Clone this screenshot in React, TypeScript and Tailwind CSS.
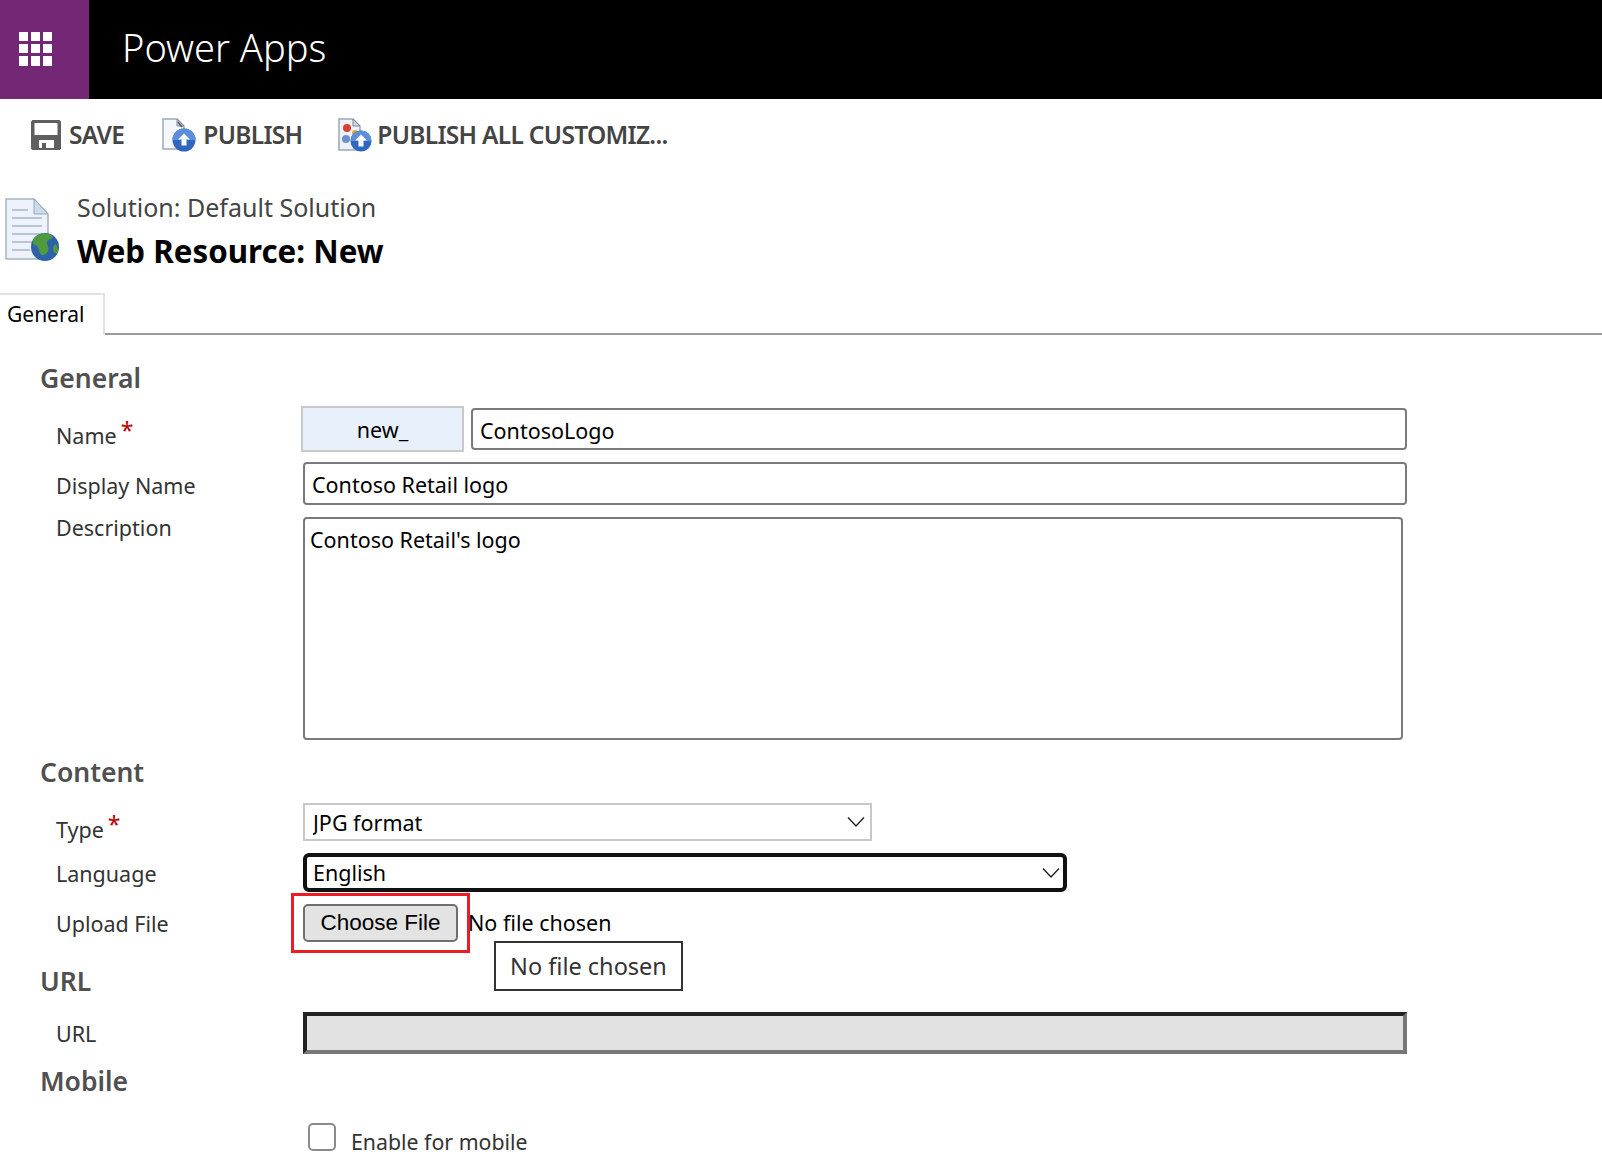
import type { ReactNode } from 'react'

function Waffle() {
  return (
    <div className="grid h-[34px] w-[34px] grid-cols-3 gap-[3px]">
      {Array.from({ length: 9 }).map((_, i) => (
        <span key={i} className="bg-white" />
      ))}
    </div>
  )
}

function SaveIcon() {
  return (
    <svg width="30" height="30" viewBox="0 0 30 30" className="shrink-0">
      <path d="M0 1.5 1.5 0h27L30 1.5v27L28.500 30h-27L0 28.500z" fill="#5f5f5f" />
      <rect x="3.500" y="3" width="23" height="12" fill="#fff" />
      <rect x="8" y="20" width="15" height="8" fill="#fff" />
      <rect x="11" y="23" width="4" height="5" fill="#5f5f5f" />
    </svg>
  )
}

function UpBall({ cx, cy, r }: { cx: number; cy: number; r: number }) {
  return (
    <>
      <circle cx={cx} cy={cy} r={r} fill="#2f66c0" />
      <path d={`M${cx - r} ${cy}a${r} ${r} 0 0 1 ${2 * r} 0z`} fill="#5b8fdc" />
      <path d={`M${cx} ${cy - 6.500}l6 6h-3.500v6h-5v-6h-3.500z`} fill="#fff" />
    </>
  )
}

function PublishIcon() {
  return (
    <svg width="34" height="34" viewBox="0 0 34 34" className="shrink-0">
      <path d="M1 1h14l7 7v23H1z" fill="#f4f7fc" stroke="#9fa8b5" strokeWidth="1.500" />
      <path d="M15 1v7h7z" fill="#c9d6e8" stroke="#7f8997" />
      <path d="M16 4l4 5" stroke="#555" strokeWidth="1.500" />
      <UpBall cx={22} cy={22} r={11.500} />
    </svg>
  )
}

function PublishAllIcon() {
  return (
    <svg width="34" height="34" viewBox="0 0 34 34" className="shrink-0">
      <path d="M1 1h14l7 7v24H1z" fill="#eef2f8" stroke="#9fa8b5" strokeWidth="1.500" />
      <path d="M15 1v7h7z" fill="#c9d6e8" stroke="#7f8997" />
      <circle cx="9" cy="10" r="4" fill="#d9412e" />
      <circle cx="17" cy="15" r="3" fill="#e9a92f" />
      <circle cx="8" cy="21" r="4" fill="#6c8fd0" />
      <UpBall cx={23} cy={23} r={10.500} />
    </svg>
  )
}

function WebResourceIcon() {
  return (
    <svg width="58" height="64" viewBox="0 0 58 64" className="shrink-0">
      <path d="M2 1h28l14 15v45H2z" fill="#eef3fb" stroke="#a9b3c2" strokeWidth="1.500" />
      <path d="M30 1v15h14z" fill="#cddbee" stroke="#9aa7b9" />
      <path d="M8 12h16M8 20h30M8 28h30M8 36h30M8 44h22M8 52h18" stroke="#b9c4d6" strokeWidth="2" />
      <circle cx="41" cy="49" r="14" fill="#2d62a8" />
      <path d="M34 37c6-3 12-2 15 2-2 3-5 2-6 5s3 5 1 9-6 6-8 2-1-6-5-8-3-7 3-10z" fill="#4f9a3e" />
      <path d="M51 46c3 2 4 6 2 10-2-1-4-2-4-5s1-3 2-5z" fill="#4f9a3e" />
    </svg>
  )
}

function ToolbarItem({ icon, label, className }: { icon: ReactNode; label: string; className: string }) {
  return (
    <div className={`flex items-center ${className}`}>
      {icon}
      <span className="font-semibold tracking-[-0.7px] text-[#444]">{label}</span>
    </div>
  )
}

function SectionTitle({ children, className }: { children: ReactNode; className: string }) {
  return <h2 className={`text-[26.500px] font-semibold leading-[36px] text-[#505050] ${className}`}>{children}</h2>
}

function Label({ children, required }: { children: ReactNode; required?: boolean }) {
  return (
    <div className="w-[263px] shrink-0 pl-4 text-[#333]">
      {children}
      {required && <span className="relative -top-[5px] ml-[4px] text-[23px] text-[#c00000]">*</span>}
    </div>
  )
}

function Chevron({ right }: { right: string }) {
  return (
    <svg
      width="18"
      height="11"
      viewBox="0 0 18 11"
      fill="none"
      stroke="#222"
      strokeWidth="1.400"
      className={`pointer-events-none absolute top-1/2 -translate-y-1/2 ${right}`}
    >
      <path d="M1 1l8 8.500L17 1" />
    </svg>
  )
}

export default function App() {
  return (
    <div
      className="h-[1167px] overflow-hidden bg-white text-[21.500px] text-black"
      style={{ fontFamily: '"Noto Sans", "Open Sans", sans-serif' }}
    >
      <header className="flex h-[99px] items-stretch bg-black">
        <div className="flex w-[89px] items-center justify-center bg-[#742774] pr-[18px] pb-[2px]">
          <Waffle />
        </div>
        <div className="flex items-center pl-[33px] pb-[4px] text-[38px] font-light text-white">Power Apps</div>
      </header>

      <div className="flex h-[72px] items-center pl-[31px] text-[24.500px]">
        <ToolbarItem className="gap-2" icon={<SaveIcon />} label="SAVE" />
        <ToolbarItem className="ml-[38px] gap-[7px]" icon={<PublishIcon />} label="PUBLISH" />
        <ToolbarItem className="ml-[36px] gap-[5px]" icon={<PublishAllIcon />} label="PUBLISH ALL CUSTOMIZ..." />
      </div>

      <div className="mt-[19px] flex h-[103px] items-start pl-[4px]">
        <div className="pt-[8px]">
          <WebResourceIcon />
        </div>
        <div className="pl-[15px]">
          <div className="text-[25px] leading-[34px] text-[#444]">Solution: Default Solution</div>
          <div className="mt-[7px] text-[31.300px] font-bold leading-[40px]">Web Resource: New</div>
        </div>
      </div>

      <div className="flex h-[42px] border-b-2 border-[#9a9a9a]">
        <div className="-mb-[2px] flex w-[105px] items-center border-t-2 border-r-2 border-[#e2e2e2] bg-white pl-[7px] text-[21px]">
          General
        </div>
      </div>

      <main className="pl-[40px] pt-[25px]">
        <SectionTitle className="mb-[10px]">General</SectionTitle>

        <div className="flex h-[56px] items-start">
          <div className="pt-[12px]">
            <Label required>Name</Label>
          </div>
          <div className="-ml-[2px] flex h-[46px] w-[163px] shrink-0 items-center justify-center border-2 border-[#c8c8c8] bg-[#e8f0fc] pt-[2px]">
            new_
          </div>
          <input
            readOnly
            value="ContosoLogo"
            className="ml-[7px] mt-[2px] h-[42px] w-[936px] rounded-[4px] border-2 border-[#7a7a7a] px-[7px] pt-[2px] outline-none"
          />
        </div>

        <div className="flex h-[55px] items-start">
          <div className="pt-[8px]">
            <Label>Display Name</Label>
          </div>
          <input
            readOnly
            value="Contoso Retail logo"
            className="h-[43px] w-[1104px] rounded-[4px] border-2 border-[#7a7a7a] px-[7px] pt-[2px] outline-none"
          />
        </div>

        <div className="flex h-[223px] items-start">
          <div className="-mt-[5px]">
            <Label>Description</Label>
          </div>
          <textarea
            readOnly
            value="Contoso Retail's logo"
            className="h-[223px] w-[1100px] resize-none rounded-[4px] border-2 border-[#7a7a7a] px-[5px] pt-[5px] pb-[3px] outline-none"
          />
        </div>

        <SectionTitle className="mt-[14px] mb-[13px]">Content</SectionTitle>

        <div className="flex h-[50px] items-start">
          <div className="pt-[9px]">
            <Label required>Type</Label>
          </div>
          <div className="relative h-[38px] w-[569px]">
            <select
              defaultValue="JPG format"
              className="h-full w-full appearance-none border-2 border-[#c8c8c8] bg-white pl-[8px] pt-[2px] outline-none"
            >
              <option>JPG format</option>
            </select>
            <Chevron right="right-[7px]" />
          </div>
        </div>

        <div className="flex h-[51px] items-start">
          <div className="pt-[5px]">
            <Label>Language</Label>
          </div>
          <div className="relative h-[39px] w-[764px]">
            <select
              defaultValue="English"
              className="h-full w-full appearance-none rounded-[6px] border-[4px] border-[#111] bg-white pl-[6px] outline-none"
            >
              <option>English</option>
            </select>
            <Chevron right="right-[7px]" />
          </div>
        </div>

        <div className="flex h-[61px] items-start">
          <div className="pt-[4px]">
            <Label>Upload File</Label>
          </div>
          <div className="relative flex items-center">
            <button
              type="button"
              className="h-[38px] w-[155px] rounded-[5px] border-2 border-[#6f6f6f] bg-[#e3e3e3] text-center text-[22.500px] text-black"
              style={{ fontFamily: '"Liberation Sans", sans-serif' }}
            >
              Choose File
            </button>
            <span className="ml-[10px] whitespace-nowrap">No file chosen</span>
            {/* red callout drawn on top of the screenshot */}
            <div className="absolute -left-[12px] -top-[11px] h-[60px] w-[179px] border-[3px] border-[#ed1c24]" />
            {/* browser tooltip */}
            <div className="absolute left-[191px] top-[37px] flex h-[50px] w-[189px] items-center justify-center border-2 border-[#333] bg-white pt-[2px] text-[23.500px] text-[#333]">
              No file chosen
            </div>
          </div>
        </div>

        <SectionTitle className="mb-[13px] -mt-[2px]">URL</SectionTitle>

        <div className="flex h-[53px] items-start">
          <div className="pt-[6px]">
            <Label>URL</Label>
          </div>
          <div className="h-[42px] w-[1104px] border-[4px] border-t-[#222] border-r-[#777] border-b-[#777] border-l-[#222] bg-[#e2e2e2]" />
        </div>

        <SectionTitle className="mb-[24px] -mt-[2px]">Mobile</SectionTitle>

        <div className="flex items-start">
          <div className="w-[263px] shrink-0" />
          <div className="ml-[5px] h-[28px] w-[28px] rounded-[5px] border-2 border-[#8a8a8a] bg-white" />
          <span className="ml-[15px] mt-[3px] text-[21.300px] text-[#333]">Enable for mobile</span>
        </div>
      </main>
    </div>
  )
}
